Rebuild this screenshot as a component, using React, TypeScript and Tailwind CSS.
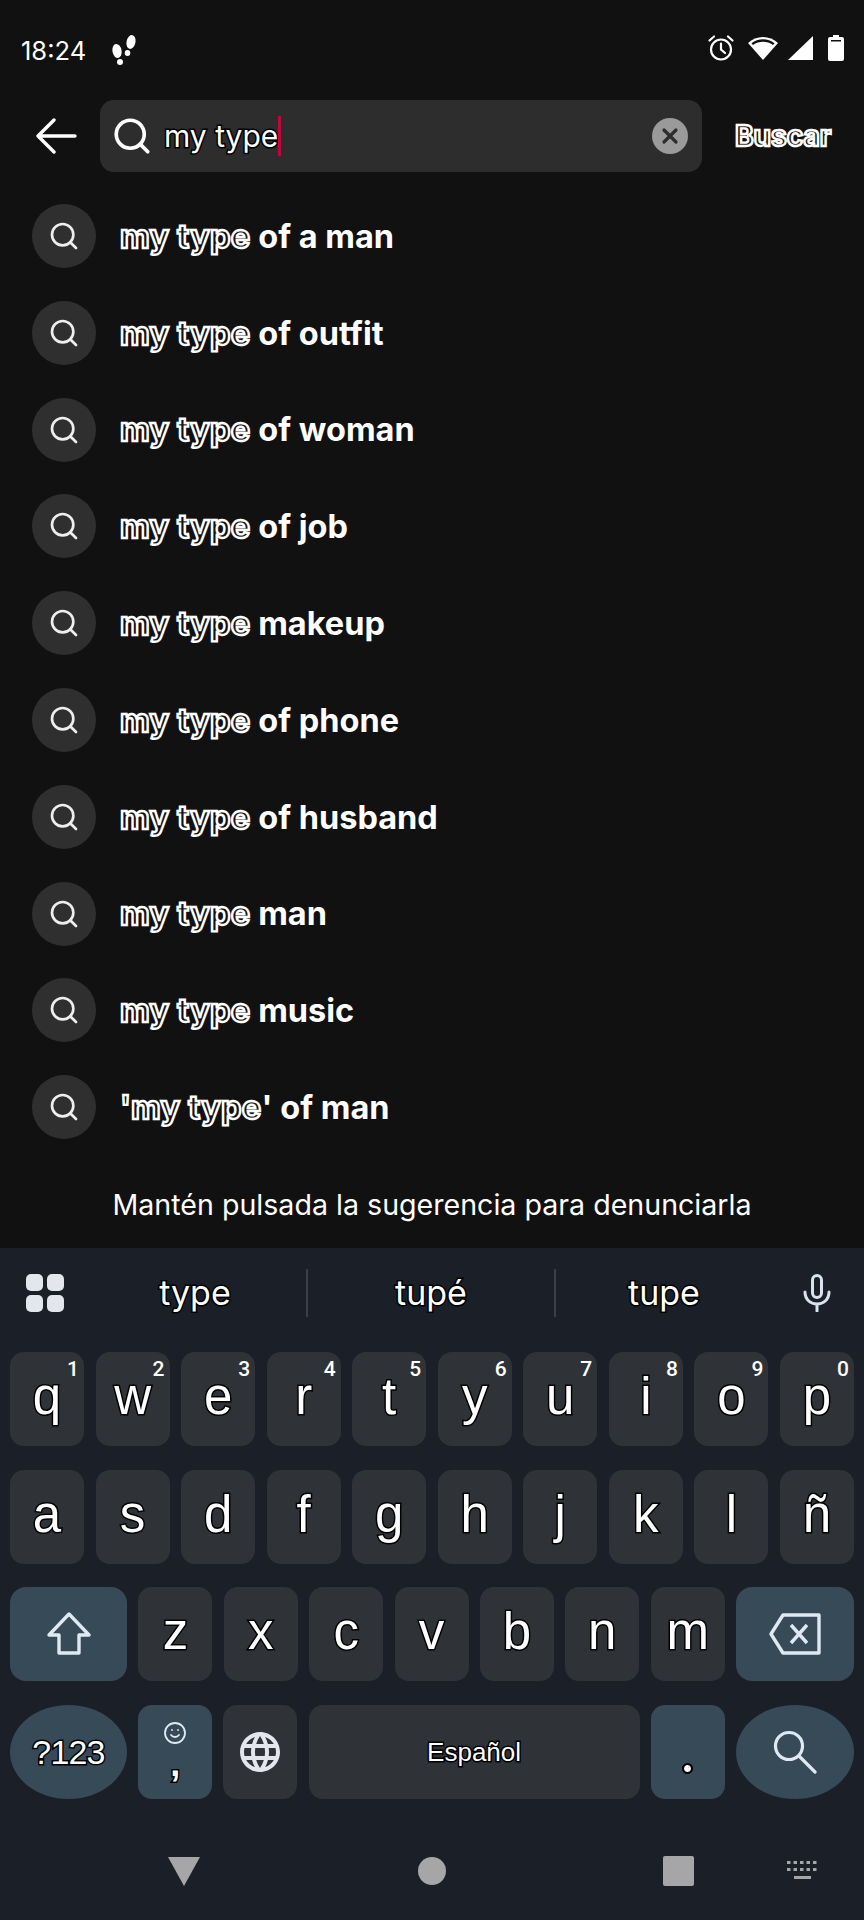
import { Search, Smile, X } from 'lucide-react';

const suggestions: { pre?: string; hit: string; rest: string }[] = [
  { hit: 'my type', rest: 'of a man' },
  { hit: 'my type', rest: 'of outfit' },
  { hit: 'my type', rest: 'of woman' },
  { hit: 'my type', rest: 'of job' },
  { hit: 'my type', rest: 'makeup' },
  { hit: 'my type', rest: 'of phone' },
  { hit: 'my type', rest: 'of husband' },
  { hit: 'my type', rest: 'man' },
  { hit: 'my type', rest: 'music' },
  { pre: "'", hit: 'my type', rest: "' of man" },
];

const topRow = [
  ['q', '1'],
  ['w', '2'],
  ['e', '3'],
  ['r', '4'],
  ['t', '5'],
  ['y', '6'],
  ['u', '7'],
  ['i', '8'],
  ['o', '9'],
  ['p', '0'],
];

// hollow letters on the highlighted part of a suggestion
const hollow = 'text-[#111112] [-webkit-text-stroke:2.4px_#fff]';
// white letters with a thin black edge, all over the keyboard
const edged = 'text-white [-webkit-text-stroke:3px_#000] [paint-order:stroke_fill]';

function Key({ label, digit }: { label: string; digit?: string }) {
  return (
    <div className="relative flex h-[94px] w-[74px] shrink-0 items-center justify-center rounded-[14px] bg-[#2f3338] pb-[5px]">
      <span className={`text-[51px] leading-none ${edged}`}>{label}</span>
      {digit && (
        <span className="absolute right-[5px] top-[5px] font-['Roboto'] text-[21px] font-medium leading-[24px] text-white">
          {digit}
        </span>
      )}
    </div>
  );
}

function StatusIcons() {
  return (
    <div className="flex items-center">
      <svg className="h-[26px] w-[26px]" viewBox="0 0 26 26" fill="none" stroke="#fff" strokeWidth="2.2" strokeLinecap="round">
        <circle cx="13" cy="14.5" r="10" />
        <path d="M13 8.5 V14.5 L17 18 M1.5 5.5 L6 1.5 M24.5 5.5 L20 1.5" />
      </svg>
      <svg className="ml-[13px] h-[26px] w-[32px]" viewBox="0 0 32 26">
        <path d="M1 8 C9 0 23 0 31 8 L16 25 Z" fill="#fff" />
        <path d="M4.5 8.3 C11 3 21 3 27.5 8.3 L26 10 C20 5.6 12 5.6 6 10 Z" fill="#111112" />
      </svg>
      <svg className="ml-[9px] h-[26px] w-[26px]" viewBox="0 0 26 26">
        <path d="M25 1 V25 H0 Z" fill="#fff" />
      </svg>
      <svg className="ml-[14px] h-[26px] w-[16px]" viewBox="0 0 16 26">
        <path d="M5 0 H11 V2 H14 Q16 2 16 4 V24 Q16 26 14 26 H2 Q0 26 0 24 V4 Q0 2 2 2 H5 Z" fill="#fff" />
        <rect x="3" y="5" width="10" height="1.5" fill="#111112" />
      </svg>
    </div>
  );
}

export default function App() {
  return (
    <div className="flex h-[1920px] w-[864px] flex-col overflow-hidden bg-[#111112] font-['Inter',sans-serif]">
      {/* Status bar */}
      <div className="flex h-[100px] items-start justify-between pl-[21px] pr-[20px] pt-[35px]">
        <div className="flex items-center">
          <span className="text-[25.5px] leading-[30px] text-white">18:24</span>
          <svg className="ml-[25px] h-[32px] w-[26px]" viewBox="0 0 26 32">
            <ellipse cx="6" cy="16" rx="4.6" ry="7" fill="#fff" transform="rotate(-10 6 16)" />
            <ellipse cx="9" cy="27" rx="3" ry="3" fill="#fff" />
            <ellipse cx="20" cy="7" rx="4.4" ry="7" fill="#fff" transform="rotate(12 20 7)" />
            <ellipse cx="16.5" cy="18" rx="2.8" ry="3" fill="#fff" />
          </svg>
        </div>
        <StatusIcons />
      </div>

      {/* Search row */}
      <div className="flex h-[72px] items-center pl-[36px]">
        <svg className="h-[36px] w-[41px]" viewBox="0 0 41 36" fill="none" stroke="#fff" strokeWidth="3.4" strokeLinecap="round" strokeLinejoin="round">
          <path d="M2 18 H39 M18 2 L2 18 L18 34" />
        </svg>
        <div className="ml-[23px] flex h-[72px] w-[602px] items-center rounded-[14px] bg-[#2d2d2e] pl-[11px] pr-[14px]">
          <Search className="h-[42px] w-[42px] text-white" strokeWidth={2.1} />
          <span className={`ml-[11px] text-[30px] leading-none ${edged}`}>my type</span>
          <div className="h-[40px] w-[3px] bg-[#c0073f]" />
          <div className="ml-auto flex h-[36px] w-[36px] items-center justify-center rounded-full bg-[#9a9a9a]">
            <X className="h-[24px] w-[24px] text-[#2d2d2e]" strokeWidth={3.2} />
          </div>
        </div>
        <span className={`ml-[33px] text-[28px] font-bold leading-none ${hollow}`}>Buscar</span>
      </div>

      {/* Suggestions */}
      <div className="mt-[32px] flex flex-col gap-[32.8px] pl-[32px]">
        {suggestions.map((s, i) => (
          <div key={i} className="flex h-[64px] items-center">
            <div className="flex h-[64px] w-[64px] items-center justify-center rounded-full bg-[#2f2f30]">
              <Search className="h-[32px] w-[32px] text-[#eeeeee]" strokeWidth={2} />
            </div>
            <p className="ml-[24px] whitespace-pre pt-[2px] text-[32.5px] font-bold leading-none text-white">
              {s.pre && <span className={hollow}>{s.pre}</span>}
              <span className={`tracking-[0.3px] ${hollow}`}>{s.hit}</span>
              {s.pre ? <span>{s.rest}</span> : <span> {s.rest}</span>}
            </p>
          </div>
        ))}
      </div>

      <p className="mt-[49px] text-center text-[28.6px] leading-[34px] text-white">
        Mantén pulsada la sugerencia para denunciarla
      </p>

      {/* Keyboard */}
      <div className="mt-[26px] flex flex-1 flex-col bg-[#1a1f28] font-['Liberation_Sans',sans-serif]">
        <div className="flex h-[104px] items-center pb-[15px]">
          <div className="flex w-[84px] justify-end pr-[20px]">
            <div className="grid grid-cols-2 gap-[4px]">
              <div className="h-[17px] w-[17px] rounded-[5px] bg-[#e3e6ec]" />
              <div className="h-[17px] w-[17px] rounded-[5px] bg-[#e3e6ec]" />
              <div className="h-[17px] w-[17px] rounded-[5px] bg-[#e3e6ec]" />
              <div className="h-[17px] w-[17px] rounded-[5px] bg-[#e3e6ec]" />
            </div>
          </div>
          <div className={`w-[222px] text-center font-['Inter'] text-[34px] ${edged}`}>type</div>
          <div className="h-[48px] w-[2px] bg-[#3a4049]" />
          <div className={`w-[246px] text-center font-['Inter'] text-[34px] ${edged}`}>tupé</div>
          <div className="h-[48px] w-[2px] bg-[#3a4049]" />
          <div className={`w-[216px] text-center font-['Inter'] text-[34px] ${edged}`}>tupe</div>
          <svg className="ml-[31px] h-[38px] w-[28px]" viewBox="0 0 28 38" fill="none" stroke="#d8e2f0" strokeWidth="3" strokeLinecap="round">
            <rect x="9.5" y="1.5" width="9" height="22" rx="4.5" />
            <path d="M2 18 C2 34 26 34 26 18 M14 30 V37" />
          </svg>
        </div>

        <div className="flex flex-col gap-[23.67px] px-[10px]">
          <div className="flex justify-between">
            {topRow.map(([k, d]) => (
              <Key key={k} label={k} digit={d} />
            ))}
          </div>

          <div className="flex justify-between">
            {['a', 's', 'd', 'f', 'g', 'h', 'j', 'k', 'l', 'ñ'].map((k) => (
              <Key key={k} label={k} />
            ))}
          </div>

          <div className="flex justify-between">
            <div className="flex h-[94px] w-[117px] items-center justify-center rounded-[16px] bg-[#374a58]">
              <svg className="h-[44px] w-[46px]" viewBox="0 0 46 44" fill="none" stroke="#dfe9f2" strokeWidth="3.4" strokeLinejoin="round">
                <path d="M23 2 L43 23 H33 V41 H13 V23 H3 Z" />
              </svg>
            </div>
            {['z', 'x', 'c', 'v', 'b', 'n', 'm'].map((k) => (
              <Key key={k} label={k} />
            ))}
            <div className="flex h-[94px] w-[118px] items-center justify-center rounded-[16px] bg-[#374a58]">
              <svg className="h-[42px] w-[52px]" viewBox="0 0 52 42" fill="none" stroke="#dfe9f2" strokeWidth="3.4" strokeLinejoin="round">
                <path d="M14 2 H50 V40 H14 L2 21 Z M22 12 L38 30 M38 12 L22 30" />
              </svg>
            </div>
          </div>

          <div className="flex justify-between">
            <div className="flex h-[94px] w-[117px] items-center justify-center rounded-[50%] bg-[#374a58]">
              <span className={`text-[34px] leading-none tracking-[-0.8px] ${edged}`}>?123</span>
            </div>
            <div className="flex h-[94px] w-[74px] flex-col items-center rounded-[14px] bg-[#374a58] pt-[16px]">
              <Smile className="h-[24px] w-[24px] text-[#dfe9f2]" strokeWidth={1.8} />
              <span className={`mt-[1px] text-[36px] font-bold leading-[36px] ${edged}`}>,</span>
            </div>
            <div className="flex h-[94px] w-[74px] items-center justify-center rounded-[14px] bg-[#2f3338]">
              <svg className="h-[48px] w-[48px]" viewBox="0 0 24 24" fill="#e3e6ec">
                <path d="M11.99 2C6.47 2 2 6.48 2 12s4.47 10 9.99 10C17.52 22 22 17.52 22 12S17.52 2 11.99 2zm6.93 6h-2.95c-.32-1.25-.78-2.45-1.38-3.56 1.84.63 3.37 1.91 4.33 3.56zM12 4.04c.83 1.2 1.48 2.53 1.91 3.96h-3.82c.43-1.43 1.08-2.76 1.91-3.96zM4.26 14C4.1 13.36 4 12.69 4 12s.1-1.36.26-2h3.38c-.08.66-.14 1.32-.14 2 0 .68.06 1.34.14 2H4.26zm.82 2h2.95c.32 1.25.78 2.45 1.38 3.56-1.84-.63-3.37-1.9-4.33-3.56zm2.95-8H5.08c.96-1.66 2.49-2.93 4.33-3.56C8.81 5.55 8.35 6.75 8.03 8zM12 19.96c-.83-1.2-1.48-2.53-1.91-3.96h3.82c-.43 1.43-1.08 2.76-1.91 3.96zM14.34 14H9.66c-.09-.66-.16-1.32-.16-2 0-.68.07-1.35.16-2h4.68c.09.65.16 1.32.16 2 0 .68-.07 1.34-.16 2zm.25 5.56c.6-1.11 1.06-2.31 1.38-3.56h2.95c-.96 1.65-2.49 2.93-4.33 3.56zM16.36 14c.08-.66.14-1.32.14-2 0-.68-.06-1.34-.14-2h3.38c.16.64.26 1.31.26 2s-.1 1.36-.26 2h-3.38z" />
              </svg>
            </div>
            <div className="flex h-[94px] w-[331px] items-center justify-center rounded-[14px] bg-[#2f3338]">
              <span className={`text-[26px] leading-none ${edged}`}>Español</span>
            </div>
            <div className="flex h-[94px] w-[74px] justify-center rounded-[14px] bg-[#374a58] pt-[60px]">
              <div className="h-[7px] w-[7px] rounded-full bg-white outline-[2px] outline-black" />
            </div>
            <div className="flex h-[94px] w-[118px] items-center justify-center rounded-[50%] bg-[#374a58]">
              <svg className="h-[44px] w-[44px]" viewBox="0 0 44 44" fill="none" stroke="#dfe9f2" strokeWidth="3.2" strokeLinecap="round">
                <circle cx="16" cy="16" r="13.5" />
                <path d="M26 26 L42 42" />
              </svg>
            </div>
          </div>
        </div>

        {/* Nav bar */}
        <div className="flex flex-1 items-center pl-[168px] pt-[23px]">
          <svg className="h-[29px] w-[32px]" viewBox="0 0 32 29">
            <path d="M0 0 H32 L16 29 Z" fill="#a6a6a8" />
          </svg>
          <div className="ml-[218px] h-[28px] w-[28px] rounded-full bg-[#a6a6a8]" />
          <div className="ml-[217px] h-[30px] w-[31px] rounded-[2px] bg-[#a6a6a8]" />
          <svg className="ml-[93px] h-[20px] w-[32px]" viewBox="0 0 32 20" fill="#a6a6a8">
            {[0, 6.5, 13, 19.5, 26].map((x) => (
              <g key={x}>
                <rect x={x} y="0" width="3.5" height="3" />
                <rect x={x} y="7" width="3.5" height="3" />
              </g>
            ))}
            <rect x="7" y="15" width="17" height="3" />
          </svg>
        </div>
      </div>
    </div>
  );
}
